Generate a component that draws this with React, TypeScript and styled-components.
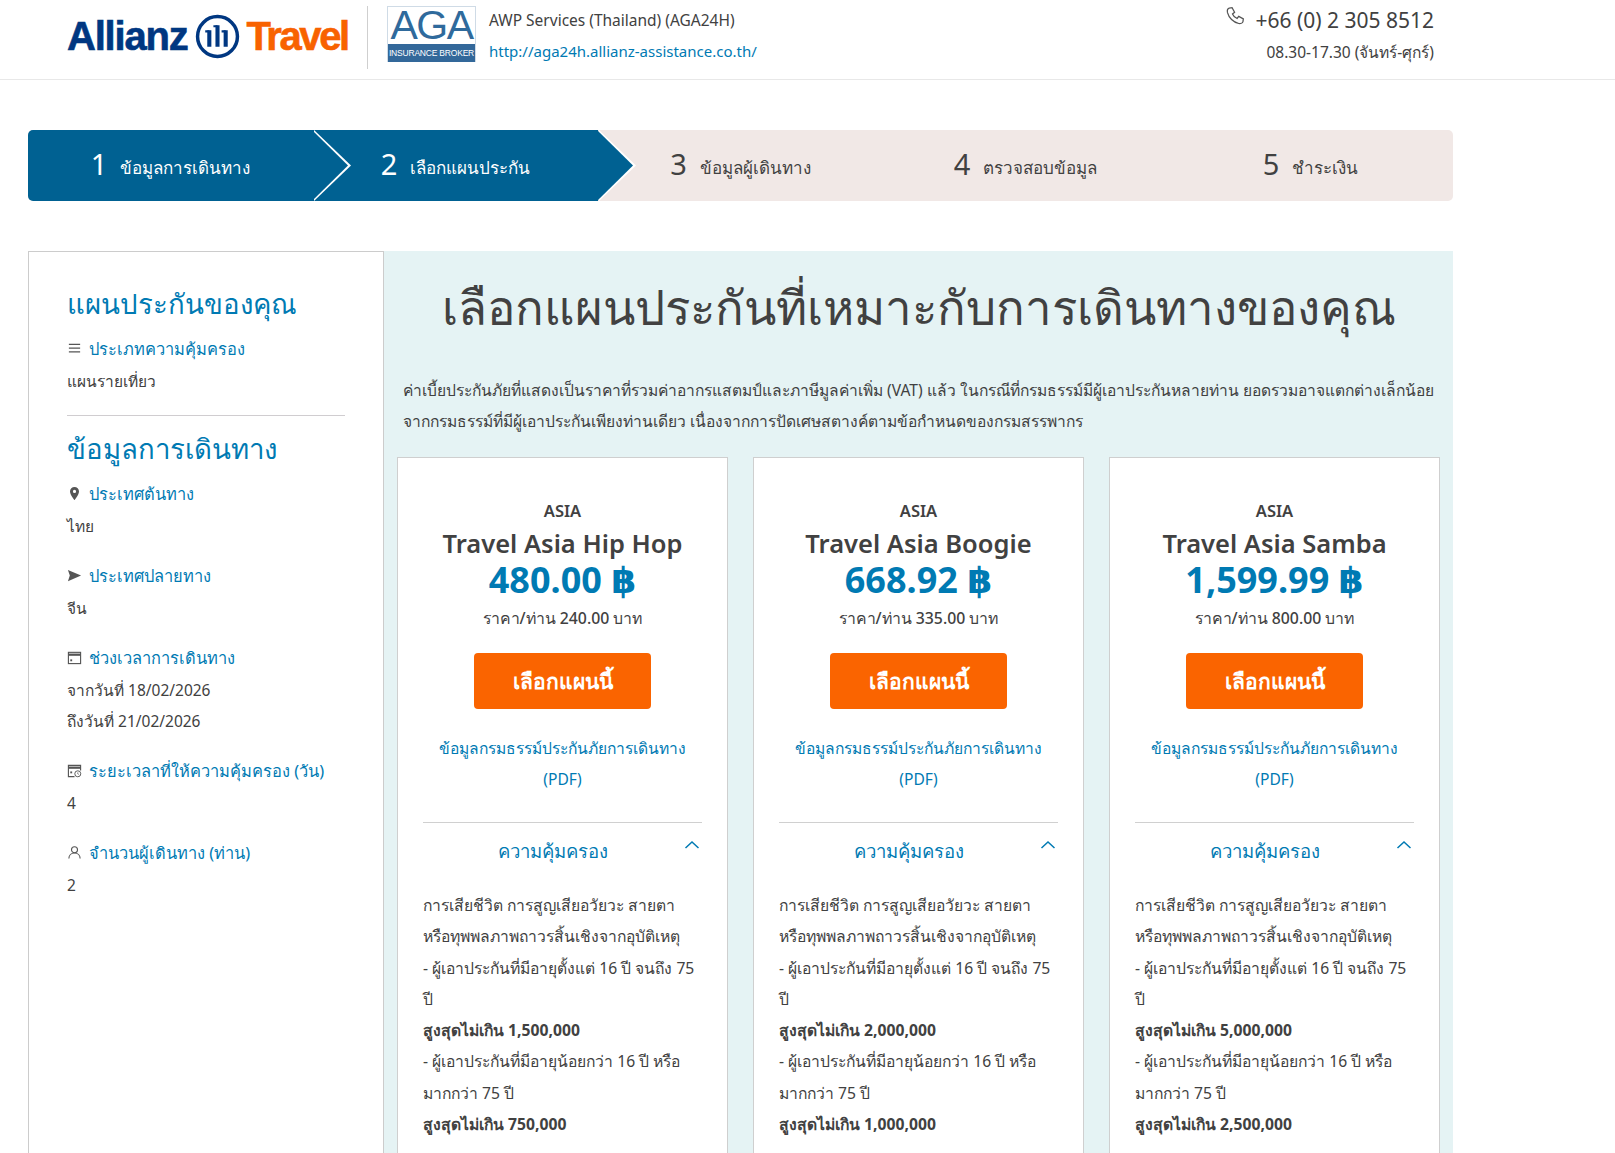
import React from "react";
import styled, { createGlobalStyle } from "styled-components";

const Global = createGlobalStyle`
  html, body { margin: 0; padding: 0; background: #fff; }
  body { font-family: "Noto Sans", "Open Sans", "DejaVu Sans", sans-serif; color: #414141; }
  #root { height: 1153px; overflow: hidden; }
  * { box-sizing: border-box; }
`;

const Header = styled.header`
  height: 80px;
  border-bottom: 1px solid #e8e8e8;
  display: flex;
  align-items: flex-start;
  padding: 6px 181px 0 67px;
`;
const Logo = styled.div`
  display: flex;
  align-items: center;
  height: 60px;
  width: 300px;
  gap: 7px;
  font-family: "Liberation Sans", sans-serif;
  font-weight: 700;
  font-size: 40px;
  white-space: nowrap;
`;
const LogoWord = styled.span<{ $c: string; $ls: number }>`
  color: ${(p) => p.$c};
  letter-spacing: ${(p) => p.$ls}px;
  -webkit-text-stroke: 0.6px ${(p) => p.$c};
`;
const VRule = styled.div`
  width: 1px;
  height: 63px;
  background: #cfcfcf;
`;
const Aga = styled.div`
  width: 89px;
  height: 56px;
  margin: 0 13px 0 19px;
  border: 1px solid #cfdbe6;
  display: flex;
  flex-direction: column;
`;
const AgaBig = styled.div`
  flex: 1;
  font-family: "Liberation Sans", sans-serif;
  font-size: 41px;
  line-height: 37px;
  text-align: center;
  letter-spacing: -1.5px;
  color: #2f6a9c;
`;
const AgaBar = styled.div`
  height: 18px;
  background: #33689a;
  color: #fff;
  font-family: "Liberation Sans", sans-serif;
  font-size: 8.5px;
  line-height: 18px;
  text-align: center;
  white-space: nowrap;
  letter-spacing: -0.2px;
`;
const Company = styled.div`
  font-size: 15.5px;
  line-height: 31px;
  margin-top: -1px;
`;
const Url = styled.div`
  color: #007ab3;
  font-size: 15px;
`;
const Contact = styled.div`
  margin-left: auto;
  text-align: right;
`;
const PhoneRow = styled.div`
  display: flex;
  align-items: flex-start;
  justify-content: flex-end;
  gap: 10px;
  font-size: 21px;
  line-height: 28px;
`;
const Hours = styled.div`
  font-size: 15.5px;
  line-height: 24px;
  margin-top: 6px;
`;

const Stepper = styled.ol`
  list-style: none;
  margin: 50px 0 0 28px;
  padding: 0;
  width: 1425px;
  height: 71px;
  display: grid;
  grid-template-columns: repeat(5, 1fr);
  background: #f1e8e6;
  border-radius: 5px;
`;
const Step = styled.li<{ $active?: boolean; $first?: boolean; $z: number }>`
  position: relative;
  z-index: ${(p) => p.$z};
  display: flex;
  align-items: center;
  justify-content: center;
  gap: 13px;
  padding-top: 2px;
  color: ${(p) => (p.$active ? "#fff" : "#414141")};
  background: ${(p) => (p.$active ? "#006192" : "transparent")};
  border-radius: ${(p) => (p.$first ? "5px 0 0 5px" : "0")};
  ${(p) =>
    p.$active
      ? `
    &::before, &::after {
      content: "";
      position: absolute;
      top: 0;
      bottom: 0;
      clip-path: polygon(0 0, 100% 50%, 0 100%);
    }
    &::before { left: calc(100% + 1px); width: 37px; background: #fff; }
    &::after { left: calc(100% - 1px); width: 36px; background: #006192; }
  `
      : ""}
`;
const StepNum = styled.span`
  font-size: 29px;
  font-weight: 400;
  line-height: 40px;
  margin-top: -6px;
`;
const StepLabel = styled.span`
  font-size: 17px;
  line-height: 24px;
  margin-top: 2px;
`;

const Main = styled.main`
  display: flex;
  margin: 50px 0 0 28px;
  width: 1425px;
  height: 902px;
`;
const Side = styled.aside`
  width: 356px;
  flex: none;
  border: 1px solid #cccccc;
  border-bottom: 0;
  padding: 29px 38px 0;
`;
const SideTitle = styled.h2`
  margin: 0 0 8px;
  font-size: 27.6px;
  line-height: 44px;
  font-weight: 400;
  color: #007ab3;
`;
const SideItem = styled.div`
  margin-bottom: 18px;
`;
const SideLabel = styled.div`
  display: flex;
  align-items: center;
  gap: 7px;
  color: #007ab3;
  font-size: 16.4px;
  line-height: 31px;
  margin-bottom: 2px;
  white-space: nowrap;
`;
const IconBox = styled.span`
  width: 15px;
  height: 15px;
  display: inline-flex;
  flex: none;
  color: #555;
`;
const SideValue = styled.div`
  font-size: 15.5px;
  line-height: 31px;
  color: #414141;
`;
const SideRule = styled.hr`
  border: 0;
  border-top: 1px solid #d0cdd0;
  margin: 3px 0 10px;
`;

const Panel = styled.section`
  flex: 1;
  min-width: 0;
  background: #e5f3f4;
  padding: 22px 12px 0 13px;
`;
const PanelTitle = styled.h1`
  margin: 0;
  font-size: 47.4px;
  font-weight: 400;
  line-height: 68px;
  text-align: center;
  white-space: nowrap;
  color: #414141;
`;
const Intro = styled.p`
  margin: 34px 0 20px 6px;
  font-size: 15.6px;
  line-height: 31px;
  white-space: nowrap;
`;
const Cards = styled.div`
  display: grid;
  grid-template-columns: repeat(3, 331px);
  gap: 25px;
`;
const Card = styled.article`
  background: #fff;
  border: 1px solid #cfcfcf;
  border-bottom: 0;
  padding: 39px 25px 0;
  height: 900px;
`;
const Region = styled.div`
  text-align: center;
  font-size: 16.5px;
  font-weight: 600;
  line-height: 28px;
`;
const PlanName = styled.div`
  text-align: center;
  font-size: 25.5px;
  font-weight: 600;
  line-height: 36px;
  white-space: nowrap;
`;
const Price = styled.div`
  text-align: center;
  font-size: 36px;
  font-weight: 700;
  line-height: 38px;
  color: #007ab3;
`;
const PerPerson = styled.div`
  text-align: center;
  font-size: 15.8px;
  font-weight: 500;
  line-height: 36px;
  margin-top: 1px;
  white-space: nowrap;
`;
const Choose = styled.button`
  display: block;
  width: 177px;
  height: 56px;
  margin: 17px auto 24px;
  background: #fa6400;
  color: #fff;
  border: 0;
  border-radius: 4px;
  font-family: inherit;
  font-size: 21px;
  font-weight: 700;
`;
const PdfLink = styled.div`
  text-align: center;
  color: #007ab3;
  font-size: 15.6px;
  line-height: 31px;
  margin: 0 -10px;
`;
const Rule = styled.hr`
  border: 0;
  border-top: 1px solid #d0d0d0;
  margin: 27px 0 0;
`;
const CoverHead = styled.div`
  position: relative;
  display: flex;
  justify-content: center;
  padding-right: 20px;
  color: #007ab3;
  font-size: 18.5px;
  font-weight: 500;
  line-height: 55px;
`;
const Chevron = styled.span`
  position: absolute;
  right: 2px;
  top: 14px;
  width: 16px;
  height: 16px;
  display: flex;
  color: #007ab3;
`;
const Body = styled.div`
  margin-top: 12px;
  font-size: 15.7px;
  line-height: 31.3px;
`;
const Strong = styled.div`
  font-weight: 700;
`;

const Svg = ({ children }: { children: React.ReactNode }) => (
  <svg viewBox="0 0 16 16" width="15" height="15" fill="none" stroke="currentColor" strokeWidth="1.2">
    {children}
  </svg>
);

const icons = {
  menu: (
    <Svg>
      <path d="M2 3.5h12M2 7.5h12M2 11.5h12" strokeWidth="1.4" />
    </Svg>
  ),
  pin: (
    <Svg>
      <path
        d="M8 1a4.800 4.800 0 0 0-4.800 4.800C3.200 9.200 8 15 8 15s4.800-5.800 4.800-9.200A4.800 4.800 0 0 0 8 1zm0 6.500a1.700 1.700 0 1 1 0-3.400 1.700 1.700 0 0 1 0 3.400z"
        fill="currentColor"
        stroke="none"
      />
    </Svg>
  ),
  send: (
    <Svg>
      <path d="M1 2l14 6-14 6 2-6z" fill="currentColor" stroke="none" />
    </Svg>
  ),
  cal: (
    <Svg>
      <rect x="1.5" y="2.5" width="13" height="12" />
      <path d="M1.5 5h13" strokeWidth="2.4" />
      <rect x="3.5" y="10" width="2" height="2" fill="currentColor" stroke="none" />
    </Svg>
  ),
  calClock: (
    <Svg>
      <path d="M8 14.500H1.500v-12h13V8" />
      <path d="M1.500 5h13" strokeWidth="2.4" />
      <rect x="3.500" y="9" width="2" height="2" fill="currentColor" stroke="none" />
      <circle cx="11.500" cy="11.500" r="3.200" strokeWidth="1" />
      <path d="M11.500 10v1.600l1 .6" strokeWidth=".8" />
    </Svg>
  ),
  user: (
    <Svg>
      <circle cx="8" cy="5" r="3.200" />
      <path d="M2 14.500c0-3.500 2.500-6 6-6s6 2.500 6 6" />
    </Svg>
  ),
};

const plans = [
  { name: "Travel Asia Hip Hop", price: "480.00", per: "240.00", a: "1,500,000", b: "750,000" },
  { name: "Travel Asia Boogie", price: "668.92", per: "335.00", a: "2,000,000", b: "1,000,000" },
  { name: "Travel Asia Samba", price: "1,599.99", per: "800.00", a: "5,000,000", b: "2,500,000" },
];

const steps = ["ข้อมูลการเดินทาง", "เลือกแผนประกัน", "ข้อมูลผู้เดินทาง", "ตรวจสอบข้อมูล", "ชำระเงิน"];

export default function App() {
  return (
    <>
      <Global />
      <Header>
        <Logo>
          <LogoWord $c="#003781" $ls={-1.2}>Allianz</LogoWord>
          <svg viewBox="0 0 44 44" width="45" height="45" fill="none" stroke="#003781">
            <circle cx="22" cy="22" r="19.5" strokeWidth="3.4" />
            <path d="M14 16v16M22 11v21M30 16v16" strokeWidth="4" />
            <path d="M10 17h4M18 12h4M26 17h4" strokeWidth="2" />
          </svg>
          <LogoWord $c="#f86200" $ls={-2.4}>Travel</LogoWord>
        </Logo>
        <VRule />
        <Aga>
          <AgaBig>AGA</AgaBig>
          <AgaBar>INSURANCE BROKER</AgaBar>
        </Aga>
        <Company>
          <div>AWP Services (Thailand) (AGA24H)</div>
          <Url>http://aga24h.allianz-assistance.co.th/</Url>
        </Company>
        <Contact>
          <PhoneRow>
            <svg viewBox="0 0 24 24" width="20" height="20" fill="none" stroke="#555" strokeWidth="1.5">
              <path d="M5 2.500 8.500 2l3 5.500-2.500 2c1 2.500 3 4.500 5.500 5.500l2-2.500 5.500 3-.5 3.500c-.5 1.500-3 2.500-5 2C10 19.500 4.500 14 3 8c-.5-2.500.5-5 2-5.500z" />
            </svg>
            <span>+66 (0) 2 305 8512</span>
          </PhoneRow>
          <Hours>08.30-17.30 (จันทร์-ศุกร์)</Hours>
        </Contact>
      </Header>

      <Stepper>
        {steps.map((s, i) => (
          <Step key={s} $active={i < 2} $first={i === 0} $z={5 - i}>
            <StepNum>{i + 1}</StepNum>
            <StepLabel>{s}</StepLabel>
          </Step>
        ))}
      </Stepper>

      <Main>
        <Side>
          <SideTitle>แผนประกันของคุณ</SideTitle>
          <SideItem>
            <SideLabel>
              <IconBox>{icons.menu}</IconBox>ประเภทความคุ้มครอง
            </SideLabel>
            <SideValue>แผนรายเที่ยว</SideValue>
          </SideItem>
          <SideRule />
          <SideTitle>ข้อมูลการเดินทาง</SideTitle>
          <SideItem>
            <SideLabel>
              <IconBox>{icons.pin}</IconBox>ประเทศต้นทาง
            </SideLabel>
            <SideValue>ไทย</SideValue>
          </SideItem>
          <SideItem>
            <SideLabel>
              <IconBox>{icons.send}</IconBox>ประเทศปลายทาง
            </SideLabel>
            <SideValue>จีน</SideValue>
          </SideItem>
          <SideItem>
            <SideLabel>
              <IconBox>{icons.cal}</IconBox>ช่วงเวลาการเดินทาง
            </SideLabel>
            <SideValue>จากวันที่ 18/02/2026</SideValue>
            <SideValue>ถึงวันที่ 21/02/2026</SideValue>
          </SideItem>
          <SideItem>
            <SideLabel>
              <IconBox>{icons.calClock}</IconBox>ระยะเวลาที่ให้ความคุ้มครอง (วัน)
            </SideLabel>
            <SideValue>4</SideValue>
          </SideItem>
          <SideItem>
            <SideLabel>
              <IconBox>{icons.user}</IconBox>จำนวนผู้เดินทาง (ท่าน)
            </SideLabel>
            <SideValue>2</SideValue>
          </SideItem>
        </Side>
        <Panel>
          <PanelTitle>เลือกแผนประกันที่เหมาะกับการเดินทางของคุณ</PanelTitle>
          <Intro>
            ค่าเบี้ยประกันภัยที่แสดงเป็นราคาที่รวมค่าอากรแสตมป์และภาษีมูลค่าเพิ่ม (VAT) แล้ว ในกรณีที่กรมธรรม์มีผู้เอาประกันหลายท่าน ยอดรวมอาจแตกต่างเล็กน้อย
            <br />
            จากกรมธรรม์ที่มีผู้เอาประกันเพียงท่านเดียว เนื่องจากการปัดเศษสตางค์ตามข้อกำหนดของกรมสรรพากร
          </Intro>
          <Cards>
            {plans.map((p) => (
              <Card key={p.name}>
                <Region>ASIA</Region>
                <PlanName>{p.name}</PlanName>
                <Price>{p.price} ฿</Price>
                <PerPerson>ราคา/ท่าน {p.per} บาท</PerPerson>
                <Choose>เลือกแผนนี้</Choose>
                <PdfLink>
                  ข้อมูลกรมธรรม์ประกันภัยการเดินทาง
                  <br />
                  (PDF)
                </PdfLink>
                <Rule />
                <CoverHead>
                  ความคุ้มครอง
                  <Chevron>
                    <svg viewBox="0 0 16 16" width="16" height="16" fill="none" stroke="currentColor" strokeWidth="1.5">
                      <path d="M1.500 11 8 5l6.500 6" />
                    </svg>
                  </Chevron>
                </CoverHead>
                <Body>
                  <div>การเสียชีวิต การสูญเสียอวัยวะ สายตา หรือทุพพลภาพถาวรสิ้นเชิงจากอุบัติเหตุ</div>
                  <div>- ผู้เอาประกันที่มีอายุตั้งแต่ 16 ปี จนถึง 75 ปี</div>
                  <Strong>สูงสุดไม่เกิน {p.a}</Strong>
                  <div>- ผู้เอาประกันที่มีอายุน้อยกว่า 16 ปี หรือมากกว่า 75 ปี</div>
                  <Strong>สูงสุดไม่เกิน {p.b}</Strong>
                </Body>
              </Card>
            ))}
          </Cards>
        </Panel>
      </Main>
    </>
  );
}
